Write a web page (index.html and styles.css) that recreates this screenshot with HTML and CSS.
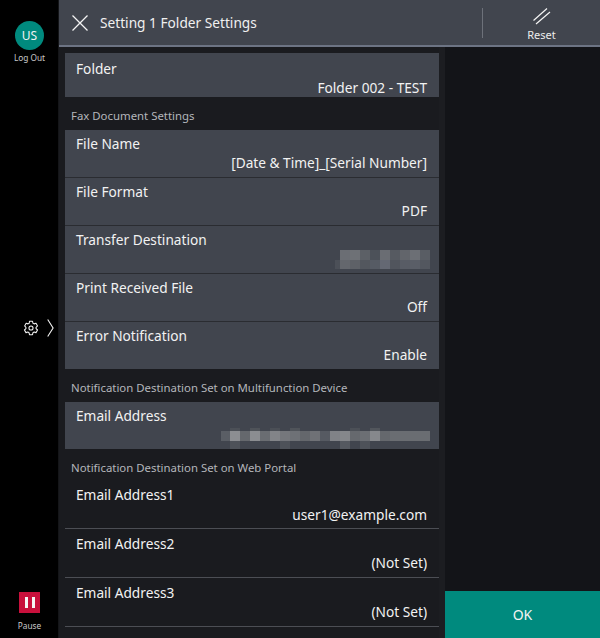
FILE: index.html
```html
<!DOCTYPE html>
<html lang="en">
<head>
<meta charset="utf-8">
<title>Setting 1 Folder Settings</title>
<link rel="stylesheet" href="styles.css">
</head>
<body>
<div class="app">
  <aside class="rail">
    <div class="user">
      <div class="avatar">US</div>
      <div class="rail-label">Log Out</div>
    </div>
    <div class="device">
      <svg width="16" height="16" viewBox="0 0 18 18" fill="none" stroke="#f2f2f2" stroke-width="1.2" stroke-linejoin="round"><path d="M7.3 1.4h3.4l.5 2.2 1.3.75 2.15-.65 1.7 2.95-1.65 1.55v1.5l1.65 1.55-1.7 2.95-2.15-.65-1.3.75-.5 2.2H7.3l-.5-2.2-1.3-.75-2.15.65-1.7-2.95 1.65-1.55v-1.5L1.85 6.65l1.7-2.95 2.15.65 1.3-.75z"/><circle cx="9" cy="9" r="2.3"/></svg>
      <svg width="7" height="18" viewBox="0 0 7 18" fill="none" stroke="#f2f2f2" stroke-width="1.1"><path d="M.7 .5l5.4 8.5L.7 17.5"/></svg>
    </div>
    <div class="pause">
      <div class="pause-btn"><span></span><span></span></div>
      <div class="rail-label">Pause</div>
    </div>
  </aside>
  <div class="main">
    <header class="top">
      <svg class="close" width="16" height="16" viewBox="0 0 16 16" fill="none" stroke="#f4f4f4" stroke-width="1.3"><path d="M.5 .5l15 15M15.500 .5l-15 15"/></svg>
      <h1 class="title">Setting 1 Folder Settings</h1>
      <div class="reset">
        <svg width="18" height="18" viewBox="0 0 18 18" fill="none" stroke="#f4f4f4" stroke-width="1.2"><path d="M.5 13.500L14 1.500M3 17L17 5"/></svg>
        <span>Reset</span>
      </div>
    </header>
    <div class="body">
      <div class="list-col">
        <div class="row row-first"><div class="name">Folder</div><div class="value">Folder 002 - TEST</div></div>
        <div class="section">Fax Document Settings</div>
        <div class="group">
          <div class="row"><div class="name">File Name</div><div class="value">[Date &amp; Time]_[Serial Number]</div></div>
          <div class="row"><div class="name">File Format</div><div class="value">PDF</div></div>
          <div class="row">
            <div class="name">Transfer Destination</div>
            <svg class="blur blur-a" width="95" height="20" viewBox="335 250 95 20">
              <rect x="340" y="250" width="10" height="10" fill="#6b6e74"/><rect x="350" y="250" width="10" height="10" fill="#6e7176"/><rect x="360" y="250" width="10" height="10" fill="#5c6066"/><rect x="370" y="250" width="10" height="10" fill="#4c5159"/><rect x="380" y="250" width="10" height="10" fill="#6a6d73"/><rect x="390" y="250" width="10" height="10" fill="#565a61"/><rect x="400" y="250" width="10" height="10" fill="#62656b"/><rect x="410" y="250" width="10" height="10" fill="#6c6f75"/><rect x="420" y="250" width="10" height="10" fill="#595d64"/>
              <rect x="335" y="260" width="5" height="9" fill="#4c5058"/><rect x="340" y="260" width="10" height="9" fill="#64676d"/><rect x="350" y="260" width="10" height="9" fill="#5e6167"/><rect x="360" y="260" width="10" height="9" fill="#53575e"/><rect x="370" y="260" width="10" height="9" fill="#565b64"/><rect x="380" y="260" width="10" height="9" fill="#646873"/><rect x="390" y="260" width="10" height="9" fill="#51555d"/><rect x="400" y="260" width="10" height="9" fill="#585c65"/><rect x="410" y="260" width="10" height="9" fill="#5a5e67"/><rect x="420" y="260" width="10" height="9" fill="#53575f"/>
            </svg>
          </div>
          <div class="row"><div class="name">Print Received File</div><div class="value">Off</div></div>
          <div class="row"><div class="name">Error Notification</div><div class="value">Enable</div></div>
        </div>
        <div class="section">Notification Destination Set on Multifunction Device</div>
        <div class="group">
          <div class="row">
            <div class="name">Email Address</div>
            <svg class="blur blur-b" width="209" height="21" viewBox="221 427 209 21">
              <rect x="221" y="430" width="209" height="10" fill="#6a6d72"/>
              <rect x="230" y="427" width="10" height="3" fill="#4c5057"/><rect x="250" y="427" width="10" height="3" fill="#4f5359"/><rect x="270" y="427" width="10" height="3" fill="#4b4f56"/><rect x="290" y="427" width="10" height="3" fill="#50545a"/><rect x="350" y="427" width="10" height="3" fill="#4c5057"/><rect x="370" y="427" width="10" height="3" fill="#52565c"/>
              <rect x="221" y="430" width="9" height="10" fill="#5a5e65"/><rect x="230" y="430" width="10" height="10" fill="#8c8e92"/><rect x="240" y="430" width="10" height="10" fill="#65686d"/><rect x="250" y="430" width="10" height="10" fill="#8b8d91"/><rect x="260" y="430" width="10" height="10" fill="#6a6d72"/><rect x="270" y="430" width="10" height="10" fill="#828488"/><rect x="280" y="430" width="10" height="10" fill="#75777c"/><rect x="290" y="430" width="10" height="10" fill="#6e7176"/><rect x="300" y="430" width="10" height="10" fill="#64676c"/><rect x="310" y="430" width="10" height="10" fill="#6f7176"/><rect x="320" y="430" width="10" height="10" fill="#565a62"/><rect x="330" y="430" width="10" height="10" fill="#808287"/><rect x="340" y="430" width="10" height="10" fill="#85878b"/><rect x="350" y="430" width="10" height="10" fill="#66696e"/><rect x="360" y="430" width="10" height="10" fill="#6c6f74"/><rect x="370" y="430" width="10" height="10" fill="#86888c"/><rect x="380" y="430" width="10" height="10" fill="#65686d"/>
              <rect x="230" y="440" width="10" height="8" fill="#4e5259"/><rect x="280" y="440" width="10" height="8" fill="#4e5259"/><rect x="340" y="440" width="10" height="8" fill="#555960"/><rect x="360" y="440" width="10" height="8" fill="#4e5259"/>
            </svg>
          </div>
        </div>
        <div class="section">Notification Destination Set on Web Portal</div>
        <div class="plain">
          <div class="row row-plain"><div class="name">Email Address1</div><div class="value">user1@example.com</div></div>
          <div class="row row-plain"><div class="name">Email Address2</div><div class="value">(Not Set)</div></div>
          <div class="row row-plain"><div class="name">Email Address3</div><div class="value">(Not Set)</div></div>
        </div>
      </div>
      <div class="side">
        <button class="ok">OK</button>
      </div>
    </div>
  </div>
</div>
</body>
</html>
```

FILE: styles.css
```css
* { box-sizing: border-box; }
html, body { margin: 0; padding: 0; }
body {
  width: 600px;
  height: 638px;
  overflow: hidden;
  background: #000;
  font-family: "Noto Sans", "Open Sans", sans-serif;
  color: #f0f0f0;
}
.app { display: flex; width: 600px; height: 638px; }

.rail {
  width: 59px;
  flex: none;
  background: #000;
  display: flex;
  flex-direction: column;
  align-items: center;
  border-right: 1px solid #141518;
  padding-left: 1px;
}
.user { padding-top: 21px; display: flex; flex-direction: column; align-items: center; }
.avatar {
  width: 29px;
  height: 29px;
  border-radius: 50%;
  background: #008a7e;
  color: #f2f2f2;
  font-size: 12px;
  line-height: 29px;
  text-align: center;
}
.rail-label { font-size: 8.300px; line-height: 12px; margin-top: 2px; color: #c9c9c9; }
.device {
  margin-top: 255px;
  display: flex;
  align-items: center;
  gap: 8px;
  align-self: flex-start;
  margin-left: 22px;
}
.pause { margin-top: auto; padding-bottom: 6px; display: flex; flex-direction: column; align-items: center; }
.pause-btn {
  width: 21px;
  height: 21px;
  background: #c8103c;
  display: flex;
  justify-content: center;
  align-items: center;
  gap: 4px;
  margin-bottom: 5px;
}
.pause-btn span { width: 3px; height: 11px; background: #f5f5f5; }

.main { flex: 1; display: flex; flex-direction: column; min-width: 0; }
.top {
  height: 47px;
  flex: none;
  background: #41454e;
  border-bottom: 2px solid #6d7484;
  display: flex;
  align-items: center;
  padding-left: 13px;
}
.close { flex: none; }
.title { margin: 0 0 0 12px; font-size: 13.700px; font-weight: 400; color: #f0f0f0; flex: 1; line-height: 20px; }
.reset {
  width: 118px;
  height: 30px;
  border-left: 1px solid #6d717a;
  display: flex;
  flex-direction: column;
  align-items: center;
  margin-top: 1px;
  color: #ececec;
  font-size: 11px;
  line-height: 14px;
  flex: none;
}
.reset svg { margin-top: -1px; margin-bottom: 3px; flex: none; }

.body { flex: 1; display: flex; min-height: 0; }
.list-col {
  width: 386px;
  flex: none;
  background: #1a1b1f;
  padding: 6px 0 0 6px;
  border-right: 6px solid #1c1d21;
  overflow: hidden;
}
.side {
  flex: 1;
  background: #131418;
  display: flex;
  flex-direction: column;
  justify-content: flex-end;
}
.ok {
  height: 47px;
  border: 0;
  background: #008a7e;
  color: #f4f4f4;
  font: 400 14px/47px "Noto Sans", sans-serif;
  padding: 0;
}

.section {
  height: 33px;
  padding: 11px 0 0 6px;
  font-size: 11.400px;
  line-height: 16px;
  color: #b4b6bb;
}
.row {
  height: 48px;
  padding: 4px 12px 0 11px;
  background: #41454e;
  border-bottom: 1px solid #2a2c31;
  position: relative;
}
.row-first { height: 44px; padding-top: 6px; border-bottom: 0; }
.group .row:last-child { border-bottom: 0; height: 47px; }
.name { font-size: 13.700px; line-height: 20px; color: #f2f2f2; }
.value { font-size: 13.700px; line-height: 20px; text-align: right; color: #f2f2f2; margin-top: -1px; }
.blur { position: absolute; display: block; }
.blur-a { right: 9px; bottom: 3px; }
.blur-b { right: 9px; bottom: 0; }

.plain { margin-top: -4px; }
.row-plain {
  height: 49px;
  background: transparent;
  border-bottom: 1px solid #4c4e54;
  padding-top: 5px;
}
.row-plain:first-child { height: 51px; padding-top: 7px; }
.row-plain:first-child .value { margin-top: 0; }
```
